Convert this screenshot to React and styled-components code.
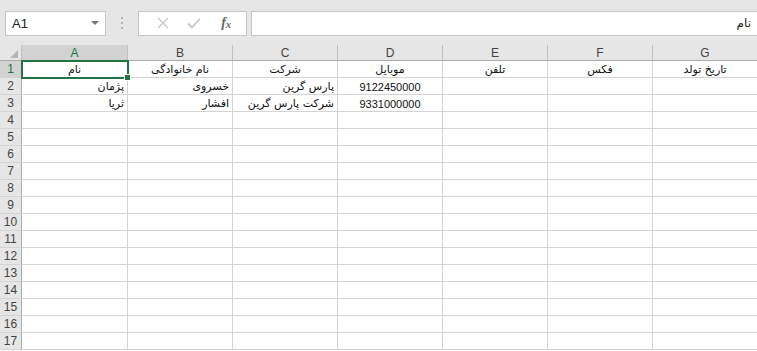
import React from "react";
import styled, { createGlobalStyle, css } from "styled-components";

const GlobalStyle = createGlobalStyle`
  html, body {
    margin: 0;
    padding: 0;
    background: #ffffff;
    overflow: hidden;
  }
  body {
    font-family: "Liberation Sans", "DejaVu Sans", sans-serif;
  }
`;

const columns = ["A", "B", "C", "D", "E", "F", "G"];

// هر ردیف: مقدار هر ستون + نوع چینش
const rows = [
  [
    { v: "نام", align: "center" },
    { v: "نام خانوادگی", align: "center" },
    { v: "شرکت", align: "center" },
    { v: "موبایل", align: "center" },
    { v: "تلفن", align: "center" },
    { v: "فکس", align: "center" },
    { v: "تاریخ تولد", align: "center" },
  ],
  [
    { v: "پژمان", align: "right" },
    { v: "خسروی", align: "right" },
    { v: "پارس گرین", align: "right" },
    { v: "9122450000", align: "center", num: true },
    {},
    {},
    {},
  ],
  [
    { v: "ثریا", align: "right" },
    { v: "افشار", align: "right" },
    { v: "شرکت پارس گرین", align: "right" },
    { v: "9331000000", align: "center", num: true },
    {},
    {},
    {},
  ],
];

const TOTAL_ROWS = 17;

const App = () => {
  const allRows = Array.from({ length: TOTAL_ROWS }, (_, i) => rows[i] || []);

  return (
    <>
      <GlobalStyle />
      <Window>
        <TopBar>
          <NameBox>
            <NameText>A1</NameText>
            <DropArrow />
          </NameBox>
          <Grip>
            <span />
            <span />
            <span />
          </Grip>
          <FuncBox>
            <FuncIcon>
              <svg width="12" height="12" viewBox="0 0 12 12">
                <path d="M1 1 L11 11 M11 1 L1 11" stroke="#c8c8c8" strokeWidth="1.4" fill="none" />
              </svg>
            </FuncIcon>
            <FuncIcon>
              <svg width="14" height="12" viewBox="0 0 14 12">
                <path d="M1 6.5 L5 10.5 L13 1.5" stroke="#c8c8c8" strokeWidth="1.8" fill="none" />
              </svg>
            </FuncIcon>
            <FxLabel>
              f<sub>x</sub>
            </FxLabel>
          </FuncBox>
          <FormulaInput>نام</FormulaInput>
        </TopBar>

        <Sheet>
          <CornerCell>
            <CornerTriangle />
          </CornerCell>
          {columns.map((c, i) => (
            <ColHeader key={c} selected={i === 0}>
              {c}
            </ColHeader>
          ))}

          {allRows.map((row, r) => (
            <React.Fragment key={r}>
              <RowHeader selected={r === 0}>{r + 1}</RowHeader>
              {columns.map((c, ci) => {
                const cell = row[ci] || {};
                const active = r === 0 && ci === 0;
                return (
                  <Cell key={c} align={cell.align} num={cell.num} active={active}>
                    {cell.v}
                    {active && <FillHandle />}
                  </Cell>
                );
              })}
            </React.Fragment>
          ))}
        </Sheet>
      </Window>
    </>
  );
};

const Window = styled.div`
  width: 757px;
  height: 351px;
  overflow: hidden;
  background: #ffffff;
`;

const TopBar = styled.div`
  height: 45px;
  background: #e6e6e6;
  display: flex;
  align-items: center;
  padding-left: 5px;
  box-sizing: border-box;
  padding-top: 1px;
`;

const NameBox = styled.div`
  width: 101px;
  height: 25px;
  box-sizing: border-box;
  border: 1px solid #c6c6c6;
  background: #ffffff;
  display: flex;
  align-items: center;
  justify-content: space-between;
  padding: 0 6px 0 6px;
`;

const NameText = styled.span`
  font-family: "Liberation Sans", sans-serif;
  font-size: 13px;
  color: #222;
`;

const DropArrow = styled.span`
  width: 0;
  height: 0;
  border-left: 4px solid transparent;
  border-right: 4px solid transparent;
  border-top: 4px solid #777;
`;

const Grip = styled.div`
  width: 32px;
  display: flex;
  flex-direction: column;
  align-items: center;
  gap: 3px;

  span {
    width: 2px;
    height: 2px;
    background: #b4b4b4;
  }
`;

const FuncBox = styled.div`
  width: 109px;
  height: 25px;
  box-sizing: border-box;
  border: 1px solid #c6c6c6;
  background: #ffffff;
  display: flex;
  align-items: center;
  justify-content: space-around;
  padding: 0 4px 0 8px;
`;

const FuncIcon = styled.span`
  display: flex;
  align-items: center;
  width: 24px;
  justify-content: center;
`;

const FxLabel = styled.span`
  font-family: "Liberation Serif", serif;
  font-style: italic;
  font-weight: bold;
  font-size: 14px;
  color: #666;
  width: 24px;
  text-align: center;

  sub {
    font-size: 10px;
    vertical-align: -1px;
  }
`;

const FormulaInput = styled.div`
  flex: 1;
  margin-left: 4px;
  height: 25px;
  box-sizing: border-box;
  border: 1px solid #c6c6c6;
  border-right: none;
  background: #ffffff;
  direction: rtl;
  display: flex;
  align-items: center;
  padding-right: 6px;
  font-family: "DejaVu Sans", sans-serif;
  font-size: 12px;
  color: #222;
`;

const Sheet = styled.div`
  display: grid;
  grid-template-columns: 22px 106px repeat(6, 105px);
  grid-template-rows: 16px repeat(${TOTAL_ROWS}, 17px);
`;

const CornerCell = styled.div`
  background: #e6e6e6;
  border-right: 1px solid #c0c0c0;
  border-bottom: 1px solid #ababab;
  box-sizing: border-box;
  position: relative;
`;

const CornerTriangle = styled.span`
  position: absolute;
  right: 3px;
  bottom: 2px;
  width: 0;
  height: 0;
  border-left: 8px solid transparent;
  border-bottom: 8px solid #b5b5b5;
`;

const ColHeader = styled.div`
  box-sizing: border-box;
  background: ${(p) => (p.selected ? "#d2d2d2" : "#e6e6e6")};
  border-right: 1px solid #c0c0c0;
  border-bottom: 1px solid ${(p) => (p.selected ? "#217346" : "#ababab")};
  color: ${(p) => (p.selected ? "#217346" : "#444")};
  font-family: "Liberation Sans", sans-serif;
  font-size: 12px;
  display: flex;
  align-items: center;
  justify-content: center;
  padding-top: 1px;
`;

const RowHeader = styled.div`
  box-sizing: border-box;
  background: ${(p) => (p.selected ? "#d2d2d2" : "#e6e6e6")};
  border-right: 1px solid ${(p) => (p.selected ? "#217346" : "#ababab")};
  border-bottom: 1px solid #d4d4d4;
  color: ${(p) => (p.selected ? "#217346" : "#444")};
  font-family: "Liberation Sans", sans-serif;
  font-size: 12px;
  display: flex;
  align-items: center;
  justify-content: center;
`;

const Cell = styled.div`
  box-sizing: border-box;
  position: relative;
  border-right: 1px solid #d4d4d4;
  border-bottom: 1px solid #d4d4d4;
  direction: rtl;
  display: flex;
  align-items: flex-end;
  justify-content: ${(p) => (p.align === "center" ? "center" : "flex-start")};
  padding: 0 3px 1px 3px;
  white-space: nowrap;
  font-family: ${(p) =>
    p.num ? `"Liberation Sans", sans-serif` : `"DejaVu Sans", sans-serif`};
  font-size: 11px;
  color: #111;
  ${(p) =>
    p.active &&
    css`
      outline: 2px solid #217346;
      outline-offset: -1px;
      z-index: 2;
    `}
`;

const FillHandle = styled.span`
  position: absolute;
  right: -4px;
  bottom: -4px;
  width: 5px;
  height: 5px;
  background: #217346;
  border: 1px solid #ffffff;
`;

export default App;
